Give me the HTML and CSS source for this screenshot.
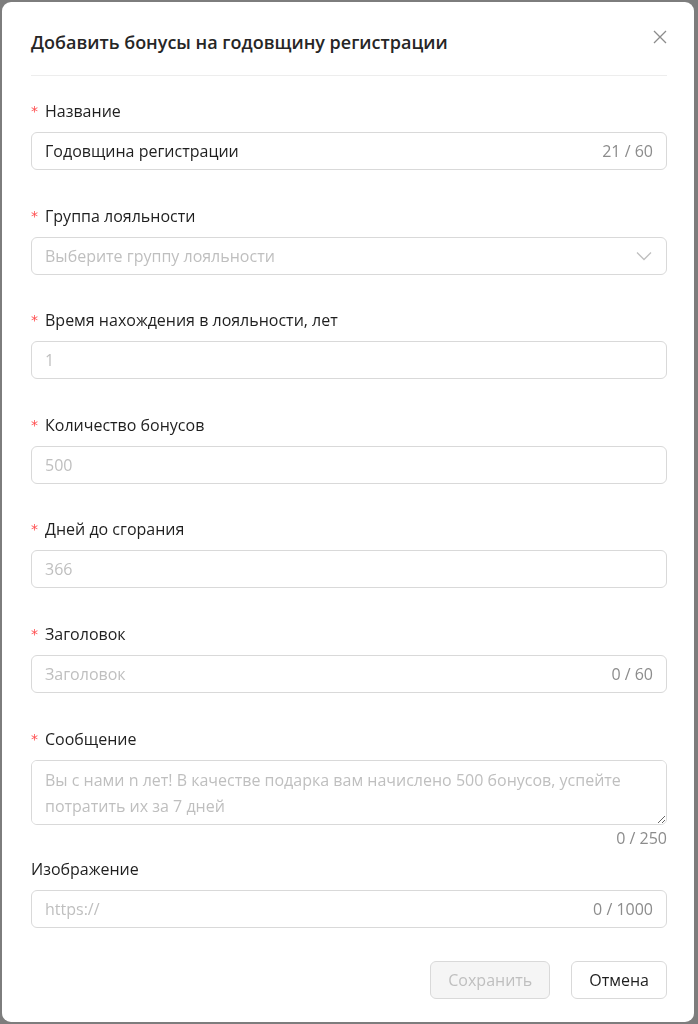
FILE: index.html
```html
<!DOCTYPE html>
<html lang="ru">
<head>
<meta charset="utf-8">
<title>Добавить бонусы</title>
<link rel="stylesheet" href="styles.css">
</head>
<body>
<div class="modal">
  <div class="modal-header">
    <h2 class="modal-title">Добавить бонусы на годовщину регистрации</h2>
    <button class="close-btn" aria-label="Закрыть">
      <svg width="14" height="14" viewBox="0 0 14 14"><path d="M1 1 L13 13 M13 1 L1 13" stroke="#8c8c8c" stroke-width="1.3" fill="none"/></svg>
    </button>
  </div>
  <form class="form">
    <div class="field">
      <label class="label"><span class="req">*</span>Название</label>
      <div class="input-wrap"><input class="input" value="Годовщина регистрации"><span class="count">21 / 60</span></div>
    </div>
    <div class="field">
      <label class="label"><span class="req">*</span>Группа лояльности</label>
      <div class="input-wrap select"><span class="placeholder">Выберите группу лояльности</span>
        <svg class="chevron" width="16" height="10" viewBox="0 0 16 10"><path d="M1 1.5 L8 8.5 L15 1.5" stroke="#bfbfbf" stroke-width="1.3" fill="none"/></svg>
      </div>
    </div>
    <div class="field">
      <label class="label"><span class="req">*</span>Время нахождения в лояльности, лет</label>
      <div class="input-wrap"><input class="input" placeholder="1"></div>
    </div>
    <div class="field">
      <label class="label"><span class="req">*</span>Количество бонусов</label>
      <div class="input-wrap"><input class="input" placeholder="500"></div>
    </div>
    <div class="field">
      <label class="label"><span class="req">*</span>Дней до сгорания</label>
      <div class="input-wrap"><input class="input" placeholder="366"></div>
    </div>
    <div class="field">
      <label class="label"><span class="req">*</span>Заголовок</label>
      <div class="input-wrap"><input class="input" placeholder="Заголовок"><span class="count">0 / 60</span></div>
    </div>
    <div class="field field-text">
      <label class="label"><span class="req">*</span>Сообщение</label>
      <textarea class="textarea" placeholder="Вы с нами n лет! В качестве подарка вам начислено 500 бонусов, успейте потратить их за 7 дней"></textarea>
      <div class="text-count">0 / 250</div>
    </div>
    <div class="field">
      <label class="label">Изображение</label>
      <div class="input-wrap"><input class="input" placeholder="https://"><span class="count">0 / 1000</span></div>
    </div>
    <div class="footer">
      <button type="button" class="btn btn-disabled" disabled>Сохранить</button>
      <button type="button" class="btn">Отмена</button>
    </div>
  </form>
</div>
</body>
</html>
```

FILE: styles.css
```css
* { box-sizing: border-box; }
html, body { margin: 0; padding: 0; }
body {
  background: #7d7d7d;
  font-family: "Open Sans", "Noto Sans", sans-serif;
  color: #1f1f1f;
  width: 698px;
  height: 1024px;
  overflow: hidden;
}
.modal {
  margin: 2px 0 0 2px;
  width: 692px;
  height: 1020px;
  background: #fff;
  border-radius: 9px;
  padding: 0 27px 0 29px;
}
.modal-header {
  position: relative;
  height: 74px;
  border-bottom: 1px solid #ededed;
  display: flex;
  align-items: center;
}
.modal-title {
  margin: 0;
  font-size: 18px;
  font-weight: 600;
  color: #262626;
  line-height: 24px;
  padding-top: 6px;
}
.close-btn {
  position: absolute;
  right: -1px;
  top: 27px;
  width: 16px;
  height: 16px;
  padding: 0;
  border: 0;
  background: none;
  display: flex;
  align-items: center;
  justify-content: center;
}
.form { padding-top: 23px; }
.field { margin-bottom: 33.6px; }
.label {
  display: flex;
  align-items: center;
  height: 24px;
  font-size: 16px;
  margin-bottom: 9px;
  color: #1f1f1f;
}
.req {
  color: #ff4d4f;
  font-size: 14px;
  width: 14px;
  font-family: "DejaVu Sans", sans-serif;
}
.input-wrap {
  height: 38px;
  border: 1px solid #d9d9d9;
  border-radius: 6px;
  display: flex;
  align-items: center;
  padding: 0 13px;
  background: #fff;
}
.input {
  flex: 1;
  border: 0;
  outline: none;
  padding: 0;
  font: inherit;
  font-size: 16px;
  color: #1f1f1f;
  background: transparent;
  min-width: 0;
}
.input::placeholder, .textarea::placeholder { color: #bfbfbf; }
.placeholder { flex: 1; font-size: 16px; color: #bfbfbf; }
.count { font-size: 16px; color: #8c8c8c; margin-left: 8px; }
.chevron { margin-right: 1px; }
.field-text { margin-bottom: 9px; }
.textarea {
  display: block;
  width: 100%;
  height: 65px;
  border: 1px solid #d9d9d9;
  border-radius: 6px;
  padding: 6px 13px;
  font: inherit;
  font-size: 16px;
  line-height: 26px;
  resize: vertical;
  outline: none;
}
.text-count {
  text-align: right;
  font-size: 16px;
  color: #8c8c8c;
  line-height: 20px;
  margin-top: 3px;
}
.field:last-of-type { margin-bottom: 0; }
.footer {
  display: flex;
  justify-content: flex-end;
  gap: 21px;
  margin-top: 31px;
}
.btn {
  height: 38px;
  padding: 0 17px;
  font: inherit;
  font-size: 16px;
  border: 1px solid #d9d9d9;
  border-radius: 6px;
  background: #fff;
  color: #1f1f1f;
}
.btn-disabled {
  background: #f5f5f5;
  color: #bfbfbf;
  width: 120px;
}
```
